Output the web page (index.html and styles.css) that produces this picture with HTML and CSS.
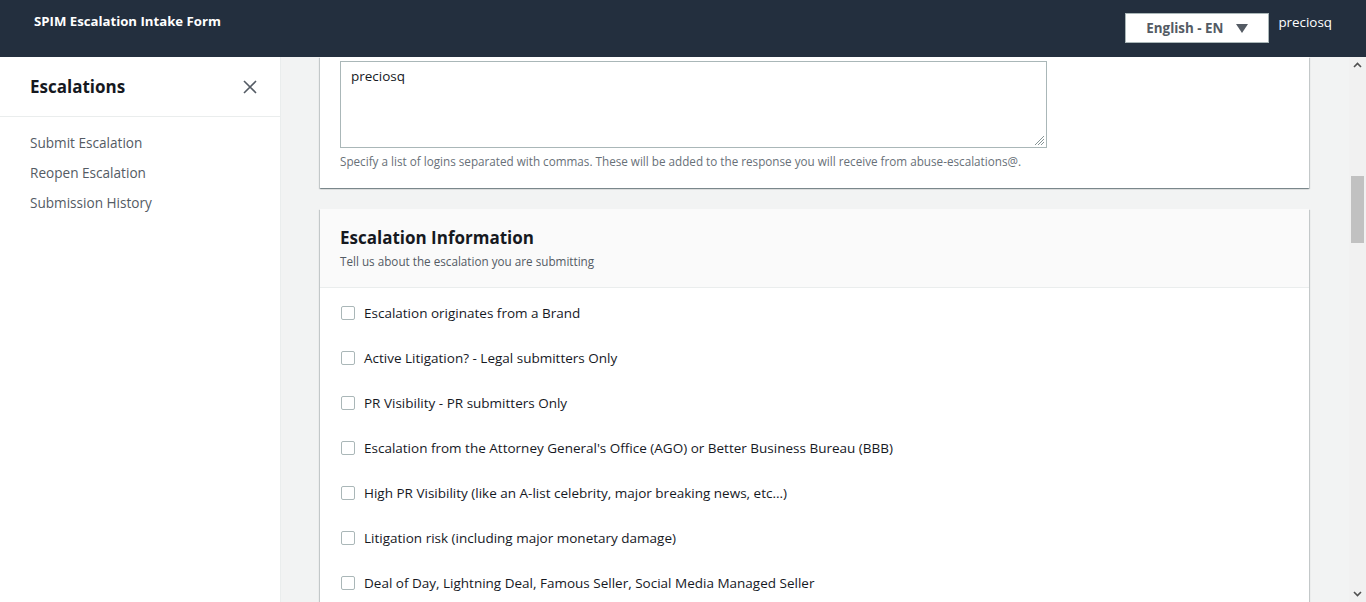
FILE: index.html
```html
<!DOCTYPE html>
<html lang="en">
<head>
    <meta charset="UTF-8">
    <meta name="viewport" content="width=device-width, initial-scale=1.0">
    <title>SPIM Escalation Intake Form</title>
    <link rel="stylesheet" href="styles.css">
</head>
<body>
    <header class="topbar">
        <div class="app-title">SPIM Escalation Intake Form</div>
        <div class="topbar-right">
            <div class="lang-select">
                <span>English - EN</span>
                <svg width="12" height="9" viewBox="0 0 12 9"><path d="M0 0h12L6 9z" fill="#545b64"/></svg>
            </div>
            <div class="user">preciosq</div>
        </div>
    </header>

    <div class="layout">
        <nav class="sidebar">
            <div class="sidebar-head">
                <h2>Escalations</h2>
                <svg class="close" width="16" height="16" viewBox="0 0 16 16"><path d="M2 2l12 12M14 2L2 14" stroke="#545b64" stroke-width="1.6" fill="none"/></svg>
            </div>
            <ul class="nav-links">
                <li><a href="#">Submit Escalation</a></li>
                <li><a href="#">Reopen Escalation</a></li>
                <li><a href="#">Submission History</a></li>
            </ul>
        </nav>

        <main class="content">
            <div class="cards">
                <section class="card card-cut">
                    <div class="card-body">
                        <div class="textarea">
                            <span>preciosq</span>
                            <svg class="resize" width="12" height="12" viewBox="0 0 12 12"><path d="M11 2L2 11M11 5L5 11M11 8L8 11" stroke="#879596" stroke-width="1" fill="none"/></svg>
                        </div>
                        <p class="hint">Specify a list of logins separated with commas. These will be added to the response you will receive from abuse-escalations@.</p>
                    </div>
                </section>

                <section class="card">
                    <div class="card-header">
                        <h3>Escalation Information</h3>
                        <p>Tell us about the escalation you are submitting</p>
                    </div>
                    <div class="check-list">
                        <label class="check"><span class="box"></span>Escalation originates from a Brand</label>
                        <label class="check"><span class="box"></span>Active Litigation? - Legal submitters Only</label>
                        <label class="check"><span class="box"></span>PR Visibility - PR submitters Only</label>
                        <label class="check"><span class="box"></span>Escalation from the Attorney General's Office (AGO) or Better Business Bureau (BBB)</label>
                        <label class="check"><span class="box"></span>High PR Visibility (like an A-list celebrity, major breaking news, etc...)</label>
                        <label class="check"><span class="box"></span>Litigation risk (including major monetary damage)</label>
                        <label class="check"><span class="box"></span>Deal of Day, Lightning Deal, Famous Seller, Social Media Managed Seller</label>
                    </div>
                </section>
            </div>

            <div class="scrollbar">
                <svg width="17" height="17" viewBox="0 0 17 17"><path d="M5 10l3.5-3.5L12 10" stroke="#505050" stroke-width="1.6" fill="none"/></svg>
                <div class="thumb"></div>
                <div class="track-fill"></div>
                <svg width="17" height="17" viewBox="0 0 17 17"><path d="M5 7l3.5 3.5L12 7" stroke="#505050" stroke-width="1.6" fill="none"/></svg>
            </div>
        </main>
    </div>
</body>
</html>
```

FILE: styles.css
```css
* {
    margin: 0;
    padding: 0;
    box-sizing: border-box;
}

body {
    font-family: 'Open Sans', 'Noto Sans', sans-serif;
    height: 100vh;
    overflow: hidden;
    background-color: #f2f3f3;
    color: #16191f;
    display: flex;
    flex-direction: column;
}

.topbar {
    height: 57px;
    background-color: #232f3e;
    color: #fff;
    display: flex;
    justify-content: space-between;
    padding: 12px 34px 0 34px;
    flex-shrink: 0;
}

.app-title {
    font-size: 13.2px;
    font-weight: 700;
    line-height: 18px;
}

.topbar-right {
    display: flex;
    align-items: flex-start;
    gap: 9px;
}

.lang-select {
    width: 144px;
    height: 30px;
    margin-top: 1px;
    background-color: #fff;
    border: 1px solid #aab7b8;
    color: #545b64;
    font-weight: 700;
    font-size: 13.4px;
    display: flex;
    align-items: center;
    justify-content: center;
    gap: 13px;
}

.user {
    font-size: 13.4px;
    line-height: 20px;
    font-weight: 500;
}

.layout {
    flex: 1;
    display: flex;
    min-height: 0;
}

.sidebar {
    width: 281px;
    background-color: #fff;
    border-right: 1px solid #eaeded;
    flex-shrink: 0;
}

.sidebar-head {
    height: 60px;
    display: flex;
    align-items: center;
    justify-content: space-between;
    padding: 0 22px 0 30px;
    border-bottom: 1px solid #eaeded;
}

.sidebar-head h2 {
    font-size: 17px;
    font-weight: 700;
    color: #16191f;
}

.nav-links {
    list-style: none;
    padding: 13px 30px;
}

.nav-links li {
    height: 30px;
    line-height: 24px;
}

.nav-links a {
    font-size: 13.6px;
    color: #545b64;
    text-decoration: none;
}

.content {
    flex: 1;
    display: flex;
    min-width: 0;
}

.cards {
    flex: 1;
    padding: 0 40px 0 39px;
    display: flex;
    flex-direction: column;
    gap: 21px;
    overflow: hidden;
}

.card {
    background-color: #fff;
    box-shadow: 0 1px 1px 0 rgba(0, 28, 36, 0.3), 1px 1px 1px 0 rgba(0, 28, 36, 0.15), -1px 1px 1px 0 rgba(0, 28, 36, 0.15);
    flex-shrink: 0;
}

.card-cut .card-body {
    padding: 4px 20px 19px 20px;
}

.textarea {
    position: relative;
    width: 707px;
    height: 87px;
    border: 1px solid #aab7b8;
    padding: 4px 10px;
    font-size: 13.5px;
    line-height: 20px;
}

.resize {
    position: absolute;
    right: 1px;
    bottom: 1px;
}

.hint {
    font-size: 11.7px;
    color: #687078;
    margin-top: 5px;
    line-height: 16px;
}

.card-header {
    background-color: #fafafa;
    border-bottom: 1px solid #eaeded;
    padding: 17px 20px 18px 20px;
}

.card-header h3 {
    font-size: 17px;
    font-weight: 700;
    line-height: 24px;
}

.card-header p {
    font-size: 11.7px;
    color: #545b64;
    line-height: 16px;
    margin-top: 3px;
}

.check-list {
    padding: 15px 20px;
    display: flex;
    flex-direction: column;
    gap: 25px;
}

.check {
    display: flex;
    align-items: center;
    gap: 10px;
    font-size: 13.5px;
    line-height: 20px;
}

.box {
    width: 14px;
    height: 14px;
    border: 1px solid #aab7b8;
    border-radius: 2px;
    background-color: #fff;
    flex-shrink: 0;
    margin-left: 1px;
    margin-right: -1px;
}

.scrollbar {
    width: 17px;
    background-color: #f1f1f1;
    display: flex;
    flex-direction: column;
    flex-shrink: 0;
}

.thumb {
    margin-top: 102px;
    height: 67px;
    background-color: #c1c1c1;
    margin-left: 2px;
    margin-right: 2px;
}

.track-fill {
    flex: 1;
}
```
